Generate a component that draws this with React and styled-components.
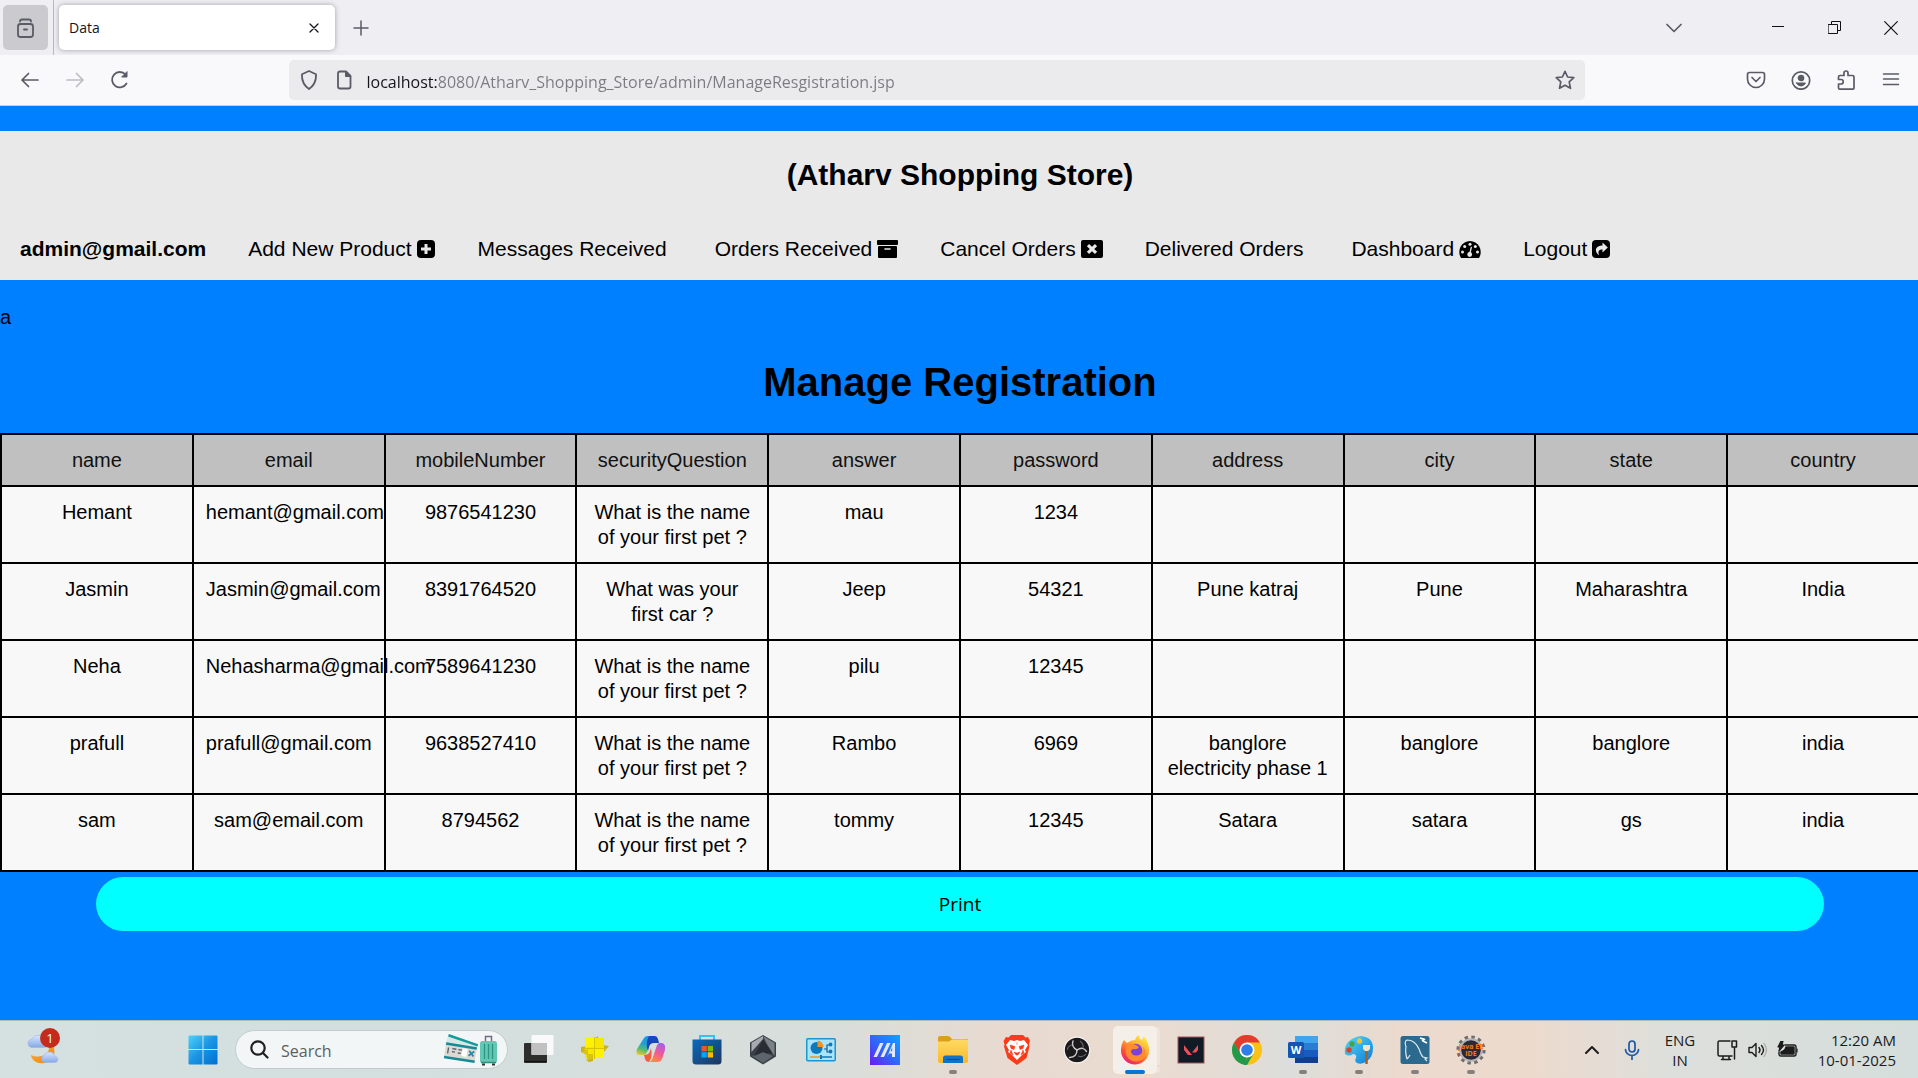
import React from "react";
import styled, { createGlobalStyle } from "styled-components";

const UI_FONT = '"Open Sans", "Noto Sans", sans-serif';
const PAGE_FONT = '"Liberation Sans", Arial, sans-serif';

const GlobalStyle = createGlobalStyle`
  *, *::before, *::after { box-sizing: border-box; }
  body { margin: 0; background: #0080ff; overflow: hidden; }
  button, input { font: inherit; color: inherit; }
  svg { display: block; flex: none; }
`;

const Screen = styled.div`
  display: flex;
  flex-direction: column;
  min-height: 100vh;
`;

/* ---------- Browser chrome ---------- */

const TabStrip = styled.header`
  display: flex;
  align-items: center;
  height: 55px;
  padding-left: 3px;
  background: #efeef3;
  font-family: ${UI_FONT};
`;

const ViewButton = styled.button`
  display: grid;
  place-items: center;
  width: 45px;
  height: 45px;
  margin-right: 5px;
  padding: 0;
  border: 0;
  border-radius: 5px;
  background: #cbcacf;
  color: #5b5b66;
`;

const StripDivider = styled.span`
  width: 1px;
  height: 55px;
  margin-right: 5px;
  background: #b9b8bf;
`;

const Tab = styled.div`
  display: flex;
  align-items: center;
  justify-content: space-between;
  width: 276px;
  height: 45px;
  padding: 0 10px;
  border-radius: 5px;
  background: #fff;
  box-shadow: 0 0 5px rgba(80, 80, 90, 0.5);
  color: #15141a;
  font-size: 14px;
`;

const IconButton = styled.button`
  display: grid;
  place-items: center;
  width: ${(p) => p.$width || 45}px;
  height: ${(p) => p.$height || 40}px;
  padding: 0;
  border: 0;
  background: transparent;
  color: ${(p) => p.$color || "#5b5b66"};
`;

const WindowControls = styled.div`
  display: flex;
  align-items: center;
  margin-left: auto;
`;

const Toolbar = styled.nav`
  display: flex;
  align-items: center;
  height: 51px;
  padding: 0 5px 0 7px;
  border-bottom: 1px solid #cccccf;
  background: #f9f9fb;
  font-family: ${UI_FONT};
`;

const ToolGroup = styled.div`
  display: flex;
  flex: ${(p) => (p.$end ? 7 : 6)} 1 0;
  justify-content: ${(p) => (p.$end ? "flex-end" : "flex-start")};
`;

const AddressBar = styled.div`
  display: flex;
  align-items: center;
  width: 68%;
  height: 40px;
  border-radius: 5px;
  background: #ebebed;
  color: #5b5b66;
`;

const AddressIcons = styled.div`
  display: flex;
  align-items: center;
  gap: 15px;
  padding: 0 13px 0 10px;
`;

const AddressInput = styled.input`
  flex: 1;
  min-width: 0;
  height: 40px;
  padding: 3px 0 0;
  border: 0;
  outline: 0;
  background: linear-gradient(to right, #15141a 71px, #7b7b80 71px);
  -webkit-background-clip: text;
  background-clip: text;
  color: transparent;
  font-size: 16px;
`;

/* ---------- Store page ---------- */

/* Runs 2px past the window so that the table's closing border stays out of view. */
const Page = styled.main`
  flex: 1;
  margin-right: -2px;
  padding-top: 25px;
  background: #0080ff;
  color: #000;
  font-family: ${PAGE_FONT};
  font-size: 20px;
`;

const StoreHeader = styled.header`
  background: #e9e9e9;
`;

const StoreTitle = styled.h2`
  margin: 0;
  padding: 26px 0 25px;
  font-size: 30px;
  line-height: 35px;
  text-align: center;
`;

const StoreNav = styled.nav`
  display: flex;
  gap: 2px;
  font-size: 21px;
  line-height: 24px;
`;

const StoreLink = styled.a`
  display: flex;
  align-items: center;
  gap: 5px;
  padding: 20px ${(p) => (p.$spaced ? 26 : 20)}px 19px 20px;
  color: #000;
  font-weight: ${(p) => (p.$strong ? "bold" : "normal")};
  text-decoration: none;
  white-space: nowrap;
`;

const Stray = styled.p`
  margin: 0;
  padding-top: 23px;
  line-height: 28px;
`;

const PageTitle = styled.h1`
  margin: 28px 0;
  font-size: 40px;
  line-height: 46px;
  text-align: center;
`;

const Table = styled.table`
  width: 100%;
  table-layout: fixed;
  border-collapse: collapse;
  line-height: 25px;
  text-align: center;
`;

const HeadCell = styled.th`
  height: 52px;
  padding: 12px;
  border: 2px solid #000;
  background: #c0c0c0;
  color: #111;
  font-weight: normal;
`;

const Cell = styled.td`
  height: 77px;
  padding: 13px 12px 12px;
  border: 2px solid #000;
  background: #f8f8f8;
  vertical-align: top;
`;

const PrintButton = styled.button`
  display: block;
  width: 90%;
  height: 54px;
  margin: 5px auto 0;
  border: 0;
  border-radius: 27px;
  background: #00ffff;
  color: #000;
  font-family: ${UI_FONT};
  font-size: 19px;
`;

/* ---------- Taskbar ---------- */

const Taskbar = styled.footer`
  display: flex;
  align-items: center;
  height: 58px;
  border-top: 1px solid #b5b9b9;
  background: linear-gradient(to right, #d5e1e0 0%, #d3dfde 24%, #d9dedb 44%, #e8dad0 52%, #eadbd0 60%, #e2dcd6 65%, #dcdedb 67%, #ebdacd 73%, #ecdacd 80%, #dddfdb 87%, #d5dedc 100%);
  color: #1c1c1c;
  font-family: ${UI_FONT};
`;

const Weather = styled.button`
  display: flex;
  width: 188px;
  padding: 0 0 0 24px;
  border: 0;
  background: transparent;
`;

const Badge = styled.span`
  display: grid;
  place-items: center;
  width: 20px;
  height: 20px;
  margin: -4px 0 0 -22px;
  border-radius: 50%;
  background: #c42b1c;
  color: #fff;
  font-size: 13px;
  line-height: 20px;
`;

const TaskSearch = styled.label`
  display: flex;
  align-items: center;
  width: 273px;
  height: 39px;
  margin: 0 3px 0 17px;
  padding: 0 10px 0 14px;
  border: 1px solid #c4cccb;
  border-radius: 20px;
  background: #f3f6f6;
  color: #202020;
`;

const TaskSearchInput = styled.input`
  flex: 1;
  min-width: 0;
  margin-left: 12px;
  padding: 2px 0 0;
  border: 0;
  outline: 0;
  background: transparent;
  font-size: 16px;
  &::placeholder { color: #5c5f5f; opacity: 1; }
`;

const TaskButton = styled.button`
  display: flex;
  flex-direction: column;
  align-items: center;
  justify-content: flex-end;
  width: ${(p) => p.$width || 56}px;
  height: 57px;
  padding: 0 0 4px;
  border: 0;
  background: transparent;
`;

const IconPlate = styled.span`
  display: grid;
  place-items: center;
  width: 44px;
  height: 40px;
  padding-top: 8px;
  border-radius: 5px 5px 0 0;
  background: ${(p) => (p.$active ? "#f5efea" : "transparent")};
  box-shadow: ${(p) => (p.$active ? "4px 0 0 -1px #eee5df" : "none")};
`;

const RunningMark = styled.span`
  display: flex;
  align-items: flex-end;
  justify-content: center;
  width: 44px;
  height: 8px;
  border-radius: 0 0 5px 5px;
  background: ${(p) => (p.$active ? "#f5efea" : "transparent")};
  box-shadow: ${(p) => (p.$active ? "4px 0 0 -1px #eee5df" : "none")};
  &::after {
    content: "";
    width: ${(p) => (p.$active ? 20 : 8)}px;
    height: 4px;
    border-radius: 2px;
    background: ${(p) => (p.$active ? "#0078d4" : p.$running ? "#85807b" : "transparent")};
  }
`;

const Tray = styled.div`
  display: flex;
  align-items: center;
  margin-left: auto;
  padding-right: 22px;
`;

const TrayText = styled.div`
  width: ${(p) => p.$width}px;
  font-size: 15px;
  line-height: 20px;
  text-align: ${(p) => p.$align || "center"};
  white-space: nowrap;
`;

/* ---------- Icons ---------- */

function Line({ w = 20, h = 20, vb, sw = 2, children }) {
  return (
    <svg width={w} height={h} viewBox={vb || `0 0 ${w} ${h}`} fill="none" stroke="currentColor" strokeWidth={sw} strokeLinecap="round" strokeLinejoin="round" aria-hidden="true">
      {children}
    </svg>
  );
}

function Art({ size = 30, children }) {
  return (
    <svg width={size} height={size} viewBox="0 0 30 30" aria-hidden="true">
      {children}
    </svg>
  );
}

const PlusSquare = () => (
  <svg width="19" height="20" viewBox="0 0 19 20">
    <rect y="1" width="18" height="18" rx="4" />
    <path d="M9 5v10M4 10h10" stroke="#e9e9e9" strokeWidth="3" />
  </svg>
);

const ArchiveBox = () => (
  <svg width="21" height="20" viewBox="0 0 21 20">
    <rect y="1" width="21" height="5" rx="1" />
    <rect x="1" y="7" width="19" height="12" rx="1" />
    <path d="M8 10h5" stroke="#e9e9e9" strokeWidth="1.6" strokeLinecap="round" />
  </svg>
);

const CloseBox = () => (
  <svg width="22" height="20" viewBox="0 0 22 20">
    <rect y="1" width="22" height="18" rx="2" />
    <path d="M7 6.2l8 7.6M15 6.2l-8 7.6" stroke="#e9e9e9" strokeWidth="3.2" />
  </svg>
);

const Gauge = () => (
  <svg width="22" height="20" viewBox="0 0 22 20">
    <path d="M11 2a11 11 0 0 1 9.3 16.4q-.4.6-1 .6H2.700q-.6 0-1-.6A11 11 0 0 1 11 2z" />
    <g fill="#e9e9e9">
      <circle cx="3.500" cy="13" r="1.500" />
      <circle cx="5.700" cy="7.600" r="1.500" />
      <circle cx="11" cy="5.300" r="1.500" />
      <circle cx="16.300" cy="7.600" r="1.500" />
      <circle cx="18.500" cy="13" r="1.500" />
      <circle cx="10.700" cy="15.500" r="2.400" />
    </g>
    <path d="M10.700 15l1.600-6.500" stroke="#e9e9e9" strokeWidth="1.300" strokeLinecap="round" />
  </svg>
);

const ShareSquare = () => (
  <svg width="19" height="20" viewBox="0 0 19 20">
    <rect y="1" width="18" height="18" rx="4" />
    <path d="M10.500 3.500l5.300 5-5.300 5v-3c-3.500 0-5 1.600-3.300 6C1.500 12 3.500 6.500 10.500 6.500z" fill="#e9e9e9" />
  </svg>
);

const WeatherIcon = () => (
  <svg width="38" height="36" viewBox="0 0 38 36" aria-hidden="true">
    <defs>
      <linearGradient id="moon" x1="0" y1="0" x2="1" y2="1"><stop offset="0" stopColor="#ffb52e" /><stop offset="1" stopColor="#ee7d16" /></linearGradient>
      <linearGradient id="cloud" x1="0" y1="0" x2="0" y2="1"><stop offset="0" stopColor="#d7e7ff" /><stop offset="1" stopColor="#86a8e4" /></linearGradient>
    </defs>
    <path d="M29 13c5 12-4 20-14 18-5-1-8-5-8-8 9 4 19 0 18-9z" fill="url(#moon)" />
    <path d="M8 15.500a4.200 4.200 0 0 1 .3-8.400 6.300 6.300 0 0 1 12 1.600c4 1 4 6.800-.5 6.800z" fill="url(#cloud)" stroke="#9ab5e6" strokeWidth=".6" />
    <path d="M20 30.500a4 4 0 0 1 .4-7.500 5.700 5.700 0 0 1 10.600 1.300c4 .7 4 6.200-.3 6.200z" fill="url(#cloud)" stroke="#9ab5e6" strokeWidth=".6" />
  </svg>
);

const StartIcon = () => (
  <Art>
    <defs><linearGradient id="win" gradientUnits="userSpaceOnUse" x1="0" y1="0" x2="29" y2="29"><stop stopColor="#4fd3fc" /><stop offset=".5" stopColor="#1a96e3" /><stop offset="1" stopColor="#0070d0" /></linearGradient></defs>
    <path d="M1.500.5H14.500V14H.5V1.500q0-1 1-1zM15.500.5H28.500q1 0 1 1V14h-14zM.5 15H14.500V29.500h-13q-1 0-1-1zM15.500 15h14v13.500q0 1-1 1h-13z" fill="url(#win)" />
  </Art>
);

const TravelIcon = () => (
  <svg width="54" height="32" viewBox="0 0 54 32" aria-hidden="true">
    <g transform="rotate(19 18 14)">
      <rect x="2" y="5" width="31" height="12" fill="#d6e9e6" /><path d="M2 6h31" stroke="#169a9c" strokeWidth="2.500" />
    </g>
    <g transform="rotate(9 18 18)">
      <rect x="2" y="11" width="31" height="15" fill="#dcd8d2" />
      <path d="M2 12h31M2 25.500h31" stroke="#178b95" strokeWidth="2.500" />
      <path d="M5 15.500v6M9 16h4M9 19h3M15 16h4M15 19.500h3" stroke="#565b69" strokeWidth="1.300" />
      <rect x="19" y="14" width="5" height="8" fill="#fff" /><path d="M26 15.500l5 5M31 15.500l-5 5" stroke="#258ba3" strokeWidth="1.800" />
    </g>
    <path d="M42.500 8V2.500h6V8" fill="none" stroke="#6c6e80" strokeWidth="1.500" />
    <rect x="37" y="7" width="17" height="22" rx="2.500" fill="#63c7b3" />
    <path d="M41.500 10v15M45.500 10v15M49.500 10v15" stroke="#2f9485" strokeWidth="1.300" />
    <path d="M38 28.500h15" stroke="#2b8e80" strokeWidth="1.500" /><path d="M39 30.500h3M49 30.500h3" stroke="#333" strokeWidth="2" />
  </svg>
);

const TaskViewIcon = () => (
  <Art>
    <rect x="0" y="8" width="23" height="20" rx="1" fill="#2d2d2b" /><path d="M0 26.500h23" stroke="#111" />
    <rect x="7.500" y="0" width="22" height="20" rx="1" fill="#f9f9f9" /><path d="M7.500 8H23v12H7.500z" fill="#c1c1c1" />
  </Art>
);

const StickerIcon = () => (
  <Art>
    <path d="M1 12l6-1v8l-6-2zM23 10l6 1-5 6zM6 25l7-4v5l-4 1zM14 4l4-3v5z" fill="#c9b21e" />
    <path d="M5 3h19v20H5z" fill="#f7e600" />
    <path d="M5 3h9v9H5zM15 14h9v9h-9z" fill="#fff200" /><path d="M14.500 2v22M3 13.500h23" stroke="#d8c300" />
    <path d="M1 17l7-3v5h5v4l-6 3v-6z" fill="#d9c314" />
  </Art>
);

const CopilotIcon = () => (
  <Art>
    <defs>
      <linearGradient id="cpa" x1=".5" y1="0" x2=".2" y2="1"><stop stopColor="#1597ea" /><stop offset=".4" stopColor="#24a0d0" /><stop offset=".7" stopColor="#55bb72" /><stop offset="1" stopColor="#f1c724" /></linearGradient>
      <linearGradient id="cpb" x1=".7" y1="0" x2=".3" y2="1"><stop stopColor="#a65df0" /><stop offset=".5" stopColor="#ef5a95" /><stop offset="1" stopColor="#ff8b3e" /></linearGradient>
    </defs>
    <path d="M8 3q1-2 4-2h7q-4 2-5 7l-3 9q-1 3-4 3H4Q-1 20 1 14z" fill="url(#cpa)" />
    <path d="M13 1h6q2 0 3 3l1 4h-5q-4 0-5 4l-1 4q-3-8 1-15z" fill="#1646b9" />
    <path d="M23 8h3q4 1 3 7l-3 9q-1 3-5 3h-8q3-1 4-5l3-9q1-4 3-5z" fill="url(#cpb)" />
    <path d="M8 20q5 0 6-4l1-3q2 9-2 14-3 0-4-3z" fill="#ef6043" />
  </Art>
);

const StoreIcon = () => (
  <Art>
    <defs><linearGradient id="store" x1="0" y1="0" x2="1" y2="1"><stop stopColor="#0b6cbd" /><stop offset="1" stopColor="#1f355e" /></linearGradient></defs>
    <path d="M8 6V1h14v5" fill="none" stroke="#35c1f1" strokeWidth="2" />
    <path d="M.5 4.500h29V26q0 3.500-3.500 3.500H4Q.5 29.500.5 26z" fill="url(#store)" />
    <path d="M9.500 11h5.300v5.300H9.500z" fill="#f35325" /><path d="M15.700 11H21v5.300h-5.300z" fill="#81bc06" />
    <path d="M9.500 17.200h5.300v5.300H9.500z" fill="#05a6f0" /><path d="M15.700 17.200H21v5.300h-5.300z" fill="#ffba08" />
  </Art>
);

const HexIcon = () => (
  <Art>
    <path d="M15 0l13 7.500v14L15 29.500 2 21.500v-14z" fill="#3b4047" />
    <path d="M15 1L3.500 7.800V17L15 4z" fill="#a7abb1" /><path d="M15 5l8 12-8 3-9 3z" fill="#1f2226" />
    <path d="M15 1l11.500 7v13L19 9z" fill="#7b8188" /><path d="M4 21l11-4 10 4-10 7z" fill="#5e646c" /><path d="M15 5l9 14-9-2-9 4z" fill="#292d33" />
  </Art>
);

const PanelIcon = () => (
  <Art>
    <rect x=".75" y="3.750" width="28.500" height="22" rx="1" fill="#a8e4fb" stroke="#1d96cf" strokeWidth="1.500" />
    <circle cx="10.500" cy="13" r="6" fill="#0d79bd" /><path d="M11.500 12V5.500a6.500 6.500 0 0 1 6 6.500z" fill="#f7921e" />
    <path d="M18 14h3v-4h2M21 14v3h2" fill="none" stroke="#185a8a" strokeWidth="1.200" />
    <circle cx="24.500" cy="9.500" r="1.900" fill="#1576b4" /><circle cx="24.500" cy="16.500" r="1.900" fill="#1576b4" />
    <path d="M4 22h12" stroke="#f7921e" strokeWidth="1.500" /><path d="M16 22h10" stroke="#1576b4" strokeWidth="1.500" /><path d="M15 20v4" stroke="#1576b4" strokeWidth="2" />
  </Art>
);

const AsusIcon = () => (
  <Art>
    <defs><linearGradient id="asus" x1="1" y1="0" x2="0" y2="1"><stop stopColor="#0ba6ff" /><stop offset=".55" stopColor="#3163fa" /><stop offset="1" stopColor="#6d19ef" /></linearGradient></defs>
    <path d="M0 0h30v30H0z" fill="url(#asus)" />
    <path d="M3.500 22L10 8h3.500L7 22zM10.500 22L17 8h3.500L14 22z" fill="#e0e9ff" />
    <path d="M17 22l6-14h2v14h-3v-3.500h-3z" fill="#e0e9ff" /><path d="M20.500 16.200l1.700-4v4z" fill="#3a6cf8" />
  </Art>
);

const FolderIcon = () => (
  <Art>
    <defs><linearGradient id="fold" x1="0" y1="0" x2="0" y2="1"><stop stopColor="#ffdb65" /><stop offset="1" stopColor="#f9b928" /></linearGradient></defs>
    <path d="M0 3q0-2 2-2h8q1 0 2 1l2 2h16v10H0z" fill="#dba017" />
    <path d="M0 6.500h11l3-2h15q1 0 1 1V26q0 2-2 2H2q-2 0-2-2z" fill="url(#fold)" />
    <path d="M5 28v-5q0-2.500 2.500-2.500h15Q25 20.500 25 23v5z" fill="#1173c5" /><path d="M8.500 24.500h13" stroke="#0a4a8c" />
  </Art>
);

const BraveIcon = () => (
  <Art>
    <path d="M9 0h12l2.500 2.500 2.500-.5 2 4-1 3.500.500 2L24.500 23 15 30 5.500 23 2 11.500l.5-2L1.500 6l2.500-4 2.500.5z" fill="#fb3a17" />
    <path d="M15 5l3 1 4-1 4 5-3 5 1 2-4 3-5 5-5-5-4-3 1-2-3-5 4-5 4 1z" fill="#fff" />
    <path d="M8 10l5 1.500-1 3-3-1zM22 10l-5 1.500 1 3 3-1zM12 17l3 1 3-1-2 3h-2zM9 15l-1 3 3 2zM21 15l1 3-3 2zM15 7v3" fill="#fb3a17" stroke="#fb3a17" strokeWidth=".5" />
  </Art>
);

const ObsIcon = () => (
  <Art>
    <circle cx="15" cy="15" r="12.800" fill="#1b191b" stroke="#f5f3f2" strokeWidth="1.200" />
    <g fill="none" stroke="#c9c7c7" strokeWidth="1.400" strokeLinecap="round">
      <path d="M11 6q-2 6 4 9" /><path d="M15 15q6-4 9.500 1.500" /><path d="M15 15q0 7-7.500 7.500" />
    </g>
    <path d="M18 6q4 3 3 7M24 19q-3 4-8 2M5.500 15q0-4 4.500-5" fill="none" stroke="#68686a" strokeWidth="1.100" />
  </Art>
);

const FirefoxIcon = () => (
  <Art>
    <defs><linearGradient id="fox" x1=".8" y1="0" x2=".2" y2="1"><stop stopColor="#fff04b" /><stop offset=".4" stopColor="#ffa631" /><stop offset=".7" stopColor="#ff5136" /><stop offset="1" stopColor="#e31587" /></linearGradient></defs>
    <path d="M4 5l3 3q4-3 8-3 1-4 4-5 0 3 2 5 2-1 3-4 5 7 5 14a14 14 0 0 1-28 1Q1 9 4 5z" fill="url(#fox)" />
    <circle cx="15.500" cy="15.500" r="6.800" fill="#7b41d8" />
    <path d="M7 9q5-1 9 1l3 2q-2 3-5 2-3 0-3 3 2 5 8 3 6-2 4-9 5 8 0 13-7 5-14 0-6-6-2-15z" fill="#ff8b2e" />
  </Art>
);

const ValorantIcon = () => (
  <Art>
    <rect x="2" y="2" width="26" height="26" fill="#101b26" stroke="#a1545a" />
    <path d="M8 10l8 10h-4l-4-5zM22 10v5l-2 2.500h-4z" fill="#f04b57" />
  </Art>
);

const ChromeIcon = () => (
  <Art>
    <circle cx="15" cy="15" r="15" fill="#fbc116" />
    <path d="M15 15L8 19 2 7.500A15 15 0 0 1 28 7.500H15z" fill="#e33b2e" />
    <path d="M2 7.500L8.500 18.800 15 22l-2 7.900A15 15 0 0 1 2 7.500z" fill="#229a4c" />
    <path d="M21.500 18.800L15 30q-2 0-3-.3L16 21z" fill="#229a4c" />
    <circle cx="15" cy="15" r="7.500" fill="#fff" /><circle cx="15" cy="15" r="5.800" fill="#2f7de9" />
  </Art>
);

const LETTER_STYLE = { fontFamily: '"Open Sans", sans-serif', fontWeight: 700 };

const WordIcon = () => (
  <Art>
    <path d="M7 1h23v7H7z" fill="#41a5ee" /><path d="M7 8h23v7H7z" fill="#2b7cd3" /><path d="M7 15h23v7H7z" fill="#185abd" /><path d="M7 22h23v6H7z" fill="#103f91" />
    <rect x="0" y="7" width="16" height="16" rx="1.500" fill="#1554b5" />
    <text x="8" y="19" textAnchor="middle" fill="#fff" fontSize="11" style={LETTER_STYLE}>W</text>
  </Art>
);

const PaintIcon = () => (
  <Art>
    <defs><linearGradient id="paint" x1="0" y1="0" x2="1" y2="1"><stop stopColor="#57d9f5" /><stop offset="1" stopColor="#0c7bd8" /></linearGradient></defs>
    <path d="M17 1q12 1 12 12 0 9-6 13-5 4-10 2-3-2-1-5 1-4-3-4-4 3-8 0Q-1 4 17 1z" fill="url(#paint)" />
    <circle cx="15.500" cy="6" r="2.700" fill="#f7c12c" /><circle cx="8" cy="9" r="2.700" fill="#45a445" /><circle cx="5" cy="15" r="2.700" fill="#d3462b" />
    <path d="M19 10h7v4l-2 2h-3l-2-2z" fill="#f4e2c0" /><path d="M22.500 16v13" stroke="#a7601d" strokeWidth="2.500" />
  </Art>
);

const MySqlIcon = () => (
  <Art>
    <rect x=".5" y="1" width="29" height="28" rx="2.500" fill="#2b6a8e" />
    <path d="M7 24q-2-7-1-12-2-6 1-7 8 0 12 9 2 6 4 8l4 1-2 1 2 2M7 24q2-2 3-4" fill="none" stroke="#dce9f0" strokeWidth="1.200" />
    <path d="M20 3l3 1v2l4 2M22 6l3-2" stroke="#fff" strokeWidth="1.800" fill="none" />
  </Art>
);

const JavaIcon = () => (
  <Art>
    <circle cx="15" cy="15" r="12.800" fill="none" stroke="#6f6f6f" strokeWidth="3.600" strokeDasharray="3.350 3.350" />
    <circle cx="15" cy="15" r="10.800" fill="#2d2736" stroke="#b5b5b5" strokeWidth="2" />
    <g fill="#ef7d1e" fontSize="7" textAnchor="middle" style={LETTER_STYLE}>
      <text x="15" y="14">Java EE</text><text x="15" y="21">IDE</text>
    </g>
  </Art>
);

/* ---------- Data ---------- */

const LINKS = [
  { text: "admin@gmail.com", strong: true },
  { text: "Add New Product", icon: <PlusSquare /> },
  { text: "Messages Received", spaced: true },
  { text: "Orders Received", icon: <ArchiveBox /> },
  { text: "Cancel Orders", icon: <CloseBox /> },
  { text: "Delivered Orders", spaced: true },
  { text: "Dashboard", icon: <Gauge /> },
  { text: "Logout", icon: <ShareSquare /> },
];

const COLUMNS = ["name", "email", "mobileNumber", "securityQuestion", "answer", "password", "address", "city", "state", "country"];

const PET = "What is the name of your first pet ?";

const ROWS = [
  ["Hemant", "hemant@gmail.com", "9876541230", PET, "mau", "1234", "", "", "", ""],
  ["Jasmin", "Jasmin@gmail.com", "8391764520", "What was your first car ?", "Jeep", "54321", "Pune katraj", "Pune", "Maharashtra", "India"],
  ["Neha", "Nehasharma@gmail.com", "7589641230", PET, "pilu", "12345", "", "", "", ""],
  ["prafull", "prafull@gmail.com", "9638527410", PET, "Rambo", "6969", "banglore electricity phase 1", "banglore", "banglore", "india"],
  ["sam", "sam@email.com", "8794562", PET, "tommy", "12345", "Satara", "satara", "gs", "india"],
];

const APPS = [
  { name: "Task View", icon: <TaskViewIcon /> },
  { name: "Stickers", icon: <StickerIcon /> },
  { name: "Copilot", icon: <CopilotIcon /> },
  { name: "Microsoft Store", icon: <StoreIcon /> },
  { name: "Armoury Crate", icon: <HexIcon /> },
  { name: "Control Panel", icon: <PanelIcon />, width: 60 },
  { name: "MyASUS", icon: <AsusIcon />, width: 68 },
  { name: "File Explorer", icon: <FolderIcon />, width: 68, running: true },
  { name: "Brave", icon: <BraveIcon />, width: 60 },
  { name: "OBS Studio", icon: <ObsIcon />, width: 60 },
  { name: "Firefox", icon: <FirefoxIcon />, active: true },
  { name: "Valorant", icon: <ValorantIcon /> },
  { name: "Chrome", icon: <ChromeIcon /> },
  { name: "Word", icon: <WordIcon />, running: true },
  { name: "Paint", icon: <PaintIcon />, running: true },
  { name: "MySQL Workbench", icon: <MySqlIcon />, running: true },
  { name: "Eclipse", icon: <JavaIcon />, running: true },
];

/* ---------- Sections ---------- */

function BrowserChrome() {
  return (
    <>
      <TabStrip>
        <ViewButton aria-label="Firefox View">
          <Line w={21} sw={1.8}>
            <rect x="3" y="6" width="15" height="13" rx="2.500" /><path d="M5 3.500q0-2 2-2h7q2 0 2 2M9 11.500h3" />
          </Line>
        </ViewButton>
        <StripDivider />
        <Tab>
          <span>Data</span>
          <IconButton $width={22} $height={22} $color="#15141a" aria-label="Close tab">
            <Line w={10} h={10} sw={1.300}><path d="M1 1l8 8M9 1L1 9" /></Line>
          </IconButton>
        </Tab>
        <IconButton $width={52} aria-label="New tab">
          <Line w={16} h={16} sw={1.500}><path d="M8 1v14M1 8h14" /></Line>
        </IconButton>
        <WindowControls>
          <IconButton $width={152} aria-label="List all tabs">
            <Line w={16} h={10} sw={1.700}><path d="M1 1.500l7 7 7-7" /></Line>
          </IconButton>
          <IconButton $width={56} $color="#111" aria-label="Minimize">
            <Line w={12} h={12} sw={1}><path d="M0 4.500h12" /></Line>
          </IconButton>
          <IconButton $width={57} $color="#111" aria-label="Restore">
            <Line w={13} h={13} sw={1}><path d="M.5 3.500h9v9h-9zM3.500 3.500v-3h9v9h-3" /></Line>
          </IconButton>
          <IconButton $width={55} $color="#111" aria-label="Close">
            <Line w={14} h={14} sw={1.200}><path d="M.7.7l12.600 12.600M13.300.7L.7 13.300" /></Line>
          </IconButton>
        </WindowControls>
      </TabStrip>
      <Toolbar>
        <ToolGroup>
          <IconButton aria-label="Back"><Line sw={1.700}><path d="M18 10H2M8.500 3.500L2 10l6.500 6.500" /></Line></IconButton>
          <IconButton $color="#bdbdc2" aria-label="Forward"><Line sw={1.700}><path d="M2 10h16M11.500 3.500L18 10l-6.500 6.500" /></Line></IconButton>
          <IconButton aria-label="Reload">
            <Line sw={1.800}><path d="M16.500 13.500A7.700 7.700 0 1 1 15.500 4.500" /><path d="M17 2v5h-5z" fill="currentColor" strokeWidth="1" /></Line>
          </IconButton>
        </ToolGroup>
        <AddressBar>
          <AddressIcons>
            <Line sw={1.800}><path d="M10 1l7 3.200c.4 6-1.500 11-7 14.800C4.500 15.200 2.600 10.200 3 4.200z" /></Line>
            <Line w={20} sw={1.800}><path d="M6 1.500h6l4.500 4.500v10.500q0 2-2 2H6q-2 0-2-2v-13q0-2 2-2z" /><path d="M11.500 1.500v5h5z" fill="currentColor" strokeWidth="1" /></Line>
          </AddressIcons>
          <AddressInput aria-label="Address" defaultValue="localhost:8080/Atharv_Shopping_Store/admin/ManageResgistration.jsp" />
          <IconButton $width={40} aria-label="Bookmark this page">
            <Line sw={1.700}><path d="M10 1.300l2.600 5.700 6.200.7-4.600 4.200 1.300 6.400L10 15.200l-5.500 3.100 1.300-6.400L1.200 7.700l6.200-.7z" /></Line>
          </IconButton>
        </AddressBar>
        <ToolGroup $end>
          <IconButton aria-label="Save to Pocket">
            <Line sw={1.700}><path d="M3.500 2.500h13q2 0 2 2V9a8.500 8.500 0 0 1-17 0V4.500q0-2 2-2zM6 7.500l4 4 4-4" /></Line>
          </IconButton>
          <IconButton aria-label="Account">
            <Line sw={1.700}><circle cx="10" cy="10.500" r="8.700" /><circle cx="10" cy="8" r="2.500" fill="currentColor" /><path d="M5.500 13h9q-1.500 3-4.500 3t-4.500-3z" fill="currentColor" strokeWidth="1" /></Line>
          </IconButton>
          <IconButton aria-label="Extensions">
            <Line sw={1.700}><path d="M8 5.500V3a2 2 0 0 1 4 0v2.500h4.500q1.500 0 1.500 1.500v11q0 1.200-1.200 1.200H4q-1.500 0-1.500-1.500V14H5a2.200 2.200 0 0 0 0-4.500H2.500V7q0-1.500 1.500-1.500z" /></Line>
          </IconButton>
          <IconButton aria-label="Open application menu"><Line w={18} sw={1.500}><path d="M1.500 4h15M1.500 9h15M1.500 14.500h15" /></Line></IconButton>
        </ToolGroup>
      </Toolbar>
    </>
  );
}

function StorePage() {
  return (
    <Page>
      <StoreHeader>
        <StoreTitle>(Atharv Shopping Store)</StoreTitle>
        <StoreNav>
          {LINKS.map((link) => (
            <StoreLink key={link.text} href="#" $strong={link.strong} $spaced={link.spaced}>
              {link.text}{link.icon}
            </StoreLink>
          ))}
        </StoreNav>
      </StoreHeader>
      <Stray>a</Stray>
      <PageTitle>Manage Registration</PageTitle>
      <Table>
        <thead>
          <tr>{COLUMNS.map((c) => <HeadCell key={c} scope="col">{c}</HeadCell>)}</tr>
        </thead>
        <tbody>
          {ROWS.map((row) => (
            <tr key={row[0]}>{row.map((value, i) => <Cell key={COLUMNS[i]}>{value}</Cell>)}</tr>
          ))}
        </tbody>
      </Table>
      <PrintButton type="button">Print</PrintButton>
    </Page>
  );
}

function SystemTaskbar() {
  return (
    <Taskbar>
      <Weather aria-label="Weather"><WeatherIcon /><Badge>1</Badge></Weather>
      <IconButton $width={30} aria-label="Start"><StartIcon /></IconButton>
      <TaskSearch>
        <Line w={19} h={19} sw={2.200}><circle cx="8" cy="8" r="6.700" /><path d="M13 13l4.500 4.500" /></Line>
        <TaskSearchInput type="text" placeholder="Search" aria-label="Search" />
        <TravelIcon />
      </TaskSearch>
      {APPS.map((app) => (
        <TaskButton key={app.name} aria-label={app.name} $width={app.width}>
          <IconPlate $active={app.active}>{app.icon}</IconPlate>
          <RunningMark $active={app.active} $running={app.running} />
        </TaskButton>
      ))}
      <Tray>
        <IconButton $color="#1c1c1c" aria-label="Show hidden icons" $width={40}>
          <Line w={14} h={9} sw={2}><path d="M1 8l6-6 6 6" /></Line>
        </IconButton>
        <IconButton $color="#1d57a5" aria-label="Microphone" $width={40}>
          <Line w={16} sw={1.700}><rect x="5" y="1" width="6" height="11" rx="3" /><path d="M1.500 9.500a6.500 6 0 0 0 13 0M8 16v3.500" /></Line>
        </IconButton>
        <TrayText $width={56}>ENG<br />IN</TrayText>
        <IconButton $color="#1c1c1c" aria-label="Network" $width={38}>
          <Line w={22} h={22} sw={1.500}><path d="M14 2H3.500Q2 2 2 3.500v12Q2 17 3.500 17H16M7 17v3M13 17v3M5.500 20.500h9M16 2h4.500v6H16zM18.500 8v12" /></Line>
        </IconButton>
        <IconButton $color="#1c1c1c" aria-label="Volume" $width={24}>
          <Line sw={1.400}><path d="M1 7.500h3l4-4v13l-4-4H1zM11 7.500q2 2.500 0 5M13.500 5.500q4 4.500 0 9" /><path d="M16 3.500q5 6.500 0 13" stroke="#adb2b1" /></Line>
        </IconButton>
        <IconButton $color="#1c1c1c" aria-label="Battery" $width={36}>
          <Line w={22} h={18} sw={1.400}><path d="M8 4h9q2 0 2 2v7q0 2-2 2H4q-2 0-2-2v-2" /><path d="M9 6h8v7H4v-2q4-1 5-5z" fill="currentColor" /><path d="M4 0L1 6h2l-1 4 5-6H5l1-4zM20 8v3" fill="currentColor" strokeWidth="1.200" /></Line>
        </IconButton>
        <TrayText $width={90} $align="right">12:20 AM<br />10-01-2025</TrayText>
      </Tray>
    </Taskbar>
  );
}

export default function App() {
  return (
    <Screen>
      <GlobalStyle />
      <BrowserChrome />
      <StorePage />
      <SystemTaskbar />
    </Screen>
  );
}
